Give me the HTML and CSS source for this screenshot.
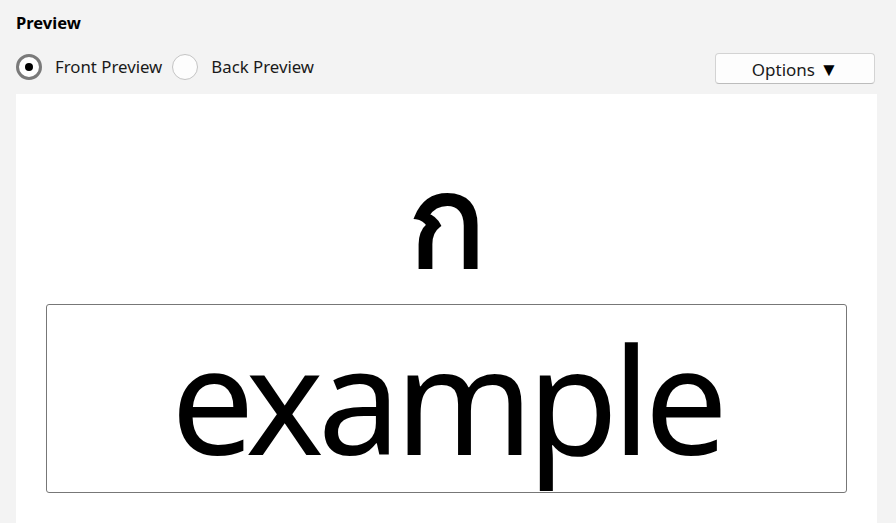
FILE: index.html
```html
<!DOCTYPE html>
<html lang="en">

<head>
    <link rel="stylesheet" href="styles.css">
</head>

<body>
    <div class="preview">
        <h2 class="preview__title">Preview</h2>

        <div class="preview__bar">
            <div class="radio-group">
                <label class="radio">
                    <input type="radio" name="side" checked>
                    <span class="radio__mark"></span>
                    Front Preview
                </label>
                <label class="radio">
                    <input type="radio" name="side">
                    <span class="radio__mark"></span>
                    Back Preview
                </label>
            </div>
            <button class="options-btn">Options <span class="options-btn__arrow">▼</span></button>
        </div>

        <div class="preview__canvas">
            <div class="glyph">ก</div>
            <div class="sample">example</div>
        </div>
    </div>
</body>

</html>
```

FILE: styles.css
```css
*,
*::after,
*::before {
    box-sizing: border-box;
}

html,
body {
    height: 100%;
}

body {
    margin: 0;
    background-color: #f3f3f3;
    font-family: "Noto Sans", "Open Sans", sans-serif;
    color: #1a1a1a;
    overflow: hidden;
}

.preview {
    height: 100%;
    padding: 0 19px 0 16px;
    display: flex;
    flex-direction: column;
}

.preview__title {
    margin: 10px 0 0;
    font-size: 16.5px;
    font-weight: 700;
    line-height: 26px;
    color: #000;
}

.preview__bar {
    margin-top: 18px;
    height: 40px;
    display: flex;
    align-items: flex-start;
    justify-content: space-between;
}

.radio-group {
    display: flex;
    gap: 10px;
}

.radio {
    display: flex;
    align-items: center;
    gap: 13px;
    font-size: 16.8px;
    line-height: 26px;
    cursor: pointer;
}

.radio input {
    display: none;
}

.radio__mark {
    width: 26px;
    height: 26px;
    border-radius: 50%;
    border: 1px solid #c4c4c4;
    background-color: #fdfdfd;
    display: flex;
    align-items: center;
    justify-content: center;
}

.radio input:checked + .radio__mark {
    border: 3px solid #7a7a7a;
    background-color: #fff;
}

.radio input:checked + .radio__mark::after {
    content: "";
    width: 8px;
    height: 8px;
    border-radius: 50%;
    background-color: #000;
}

.options-btn {
    margin-top: -1px;
    margin-right: 2px;
    width: 160px;
    height: 31px;
    padding: 0;
    font-family: inherit;
    font-size: 17px;
    color: #1a1a1a;
    background-color: #fdfdfd;
    border: 1px solid #d3d3d3;
    border-bottom-color: #bcbcbc;
    border-radius: 4px;
}

.options-btn__arrow {
    font-size: 19px;
    color: #000;
}

.preview__canvas {
    flex: 1;
    background-color: #fff;
    display: flex;
    flex-direction: column;
    align-items: center;
    padding: 0 30px;
}

.glyph {
    margin-top: 48px;
    height: 162px;
    font-size: 126px;
    font-weight: 700;
    line-height: 150px;
    color: #000;
}

.sample {
    align-self: stretch;
    height: 189px;
    border: 1px solid #777;
    border-radius: 3px;
    text-align: center;
    font-size: 148px;
    line-height: 186px;
    letter-spacing: -6px;
    color: #000;
}
```
